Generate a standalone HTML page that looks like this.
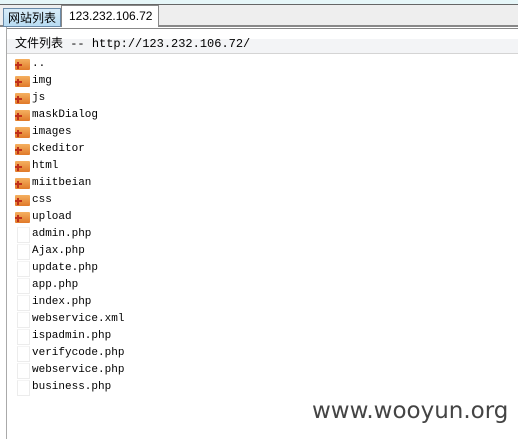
<!DOCTYPE html><html><head><style>
body{margin:0;width:518px;height:439px;background:#fff;position:relative;overflow:hidden;font-family:"Liberation Mono","Noto Sans CJK SC",monospace}
.a{position:absolute}
.row{position:absolute;left:15px;height:17px;font-size:11px;line-height:17px;color:#000}
.row span{position:absolute;left:17px;top:0}
.fo{position:absolute;left:0;top:3px;width:15px;height:11px;background:linear-gradient(#f5b060,#e07a2a);border-radius:1px}
.fo:before{content:"";position:absolute;left:2px;top:3px;width:2px;height:7px;background:#c0301a}
.fo:after{content:"";position:absolute;left:0;top:5px;width:7px;height:2px;background:#c0301a}
.fi{position:absolute;left:2px;top:1px;width:11px;height:14px;background:#fff;border:1px solid #ececec;border-top-color:#f4f4f4}
</style></head><body>
<div class="a" style="left:0;top:0;width:518px;height:4px;background:#e6f6f8"></div>
<div class="a" style="left:0;top:4px;width:518px;height:1px;background:#666"></div>
<div class="a" style="left:0;top:5px;width:518px;height:20px;background:#eeeeee"></div>
<div class="a" style="left:0;top:25px;width:518px;height:2px;background:#888"></div>
<div class="a" style="left:3px;top:8px;width:56px;height:17px;background:linear-gradient(#d8ecf8,#b8dcf2);border:1px solid #6a8aa8;font:12px 'Noto Sans CJK SC',sans-serif;line-height:17px;text-align:center;color:#000">网站列表</div>
<div class="a" style="left:61px;top:5px;width:98px;height:22px;background:#fff;border:1px solid #888;border-bottom:none;font:12px 'Liberation Sans',sans-serif;line-height:20px;padding-left:7px;box-sizing:border-box">123.232.106.72</div>
<div class="a" style="left:6px;top:27px;width:1px;height:412px;background:#aaa"></div>
<div class="a" style="left:7px;top:28px;width:511px;height:1px;background:#888"></div>
<div class="a" style="left:7px;top:39px;width:511px;height:14px;background:#f3f4f6"></div>
<div class="a" style="left:7px;top:53px;width:511px;height:1px;background:#d4d4d4"></div>
<div class="a" style="left:15px;top:34px;font-size:12px;line-height:18px;white-space:pre"><span style="font-family:'Noto Sans CJK SC',sans-serif">文件列表</span> -- http://123.232.106.72/</div>
<div class="row" style="top:56px"><i class="fo"></i><span>..</span></div>
<div class="row" style="top:73px"><i class="fo"></i><span>img</span></div>
<div class="row" style="top:90px"><i class="fo"></i><span>js</span></div>
<div class="row" style="top:107px"><i class="fo"></i><span>maskDialog</span></div>
<div class="row" style="top:124px"><i class="fo"></i><span>images</span></div>
<div class="row" style="top:141px"><i class="fo"></i><span>ckeditor</span></div>
<div class="row" style="top:158px"><i class="fo"></i><span>html</span></div>
<div class="row" style="top:175px"><i class="fo"></i><span>miitbeian</span></div>
<div class="row" style="top:192px"><i class="fo"></i><span>css</span></div>
<div class="row" style="top:209px"><i class="fo"></i><span>upload</span></div>
<div class="row" style="top:226px"><i class="fi"></i><span>admin.php</span></div>
<div class="row" style="top:243px"><i class="fi"></i><span>Ajax.php</span></div>
<div class="row" style="top:260px"><i class="fi"></i><span>update.php</span></div>
<div class="row" style="top:277px"><i class="fi"></i><span>app.php</span></div>
<div class="row" style="top:294px"><i class="fi"></i><span>index.php</span></div>
<div class="row" style="top:311px"><i class="fi"></i><span>webservice.xml</span></div>
<div class="row" style="top:328px"><i class="fi"></i><span>ispadmin.php</span></div>
<div class="row" style="top:345px"><i class="fi"></i><span>verifycode.php</span></div>
<div class="row" style="top:362px"><i class="fi"></i><span>webservice.php</span></div>
<div class="row" style="top:379px"><i class="fi"></i><span>business.php</span></div>
<div class="a" style="left:312px;top:396px;font:23px 'DejaVu Sans',sans-serif;color:#444;line-height:30px">www.wooyun.org</div>
</body></html>
